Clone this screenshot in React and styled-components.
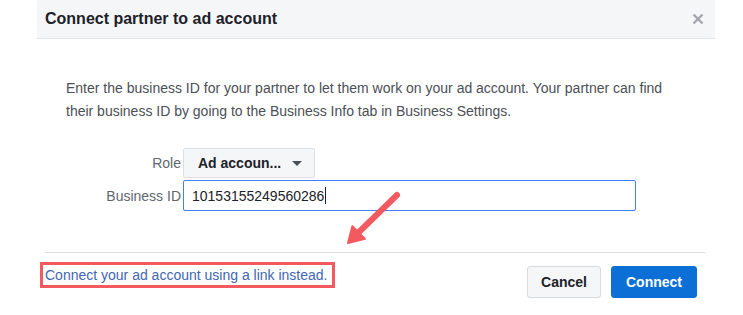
import React from "react";
import styled, { createGlobalStyle } from "styled-components";

const GlobalStyle = createGlobalStyle`
  body {
    margin: 0;
    background: #ffffff;
    font-family: "Liberation Sans", Arial, Helvetica, sans-serif;
  }
`;

const Dialog = styled.div`
  position: relative;
  margin-left: 37px;
  width: 678px;
  background: #ffffff;
`;

const Header = styled.div`
  display: flex;
  align-items: center;
  justify-content: space-between;
  height: 38px;
  padding: 0 9px 0 8px;
  background: #f5f6f7;
  border-bottom: 1px solid #e5e5e5;
`;

const Title = styled.h2`
  margin: 0;
  font-size: 16px;
  font-weight: bold;
  color: #1d2129;
`;

const Close = styled.button`
  display: flex;
  align-items: center;
  justify-content: center;
  width: 16px;
  height: 16px;
  padding: 0;
  border: 0;
  background: none;
`;

const Body = styled.div`
  padding: 38px 29px 0 29px;
`;

const Intro = styled.p`
  margin: 0;
  font-size: 14px;
  line-height: 23px;
  color: #4b4f56;
`;

const Form = styled.div`
  display: grid;
  grid-template-columns: 115px auto;
  column-gap: 2px;
  row-gap: 2px;
  align-items: center;
  margin-top: 25px;
`;

const Label = styled.label`
  text-align: right;
  font-size: 14px;
  color: #606770;
`;

const Select = styled.div`
  display: flex;
  align-items: center;
  justify-content: space-between;
  box-sizing: border-box;
  width: 132px;
  height: 30px;
  padding: 0 12px 0 14px;
  background: #f5f6f7;
  border: 1px solid #dddfe2;
  border-radius: 2px;
  font-size: 14px;
  font-weight: bold;
  color: #1d2129;
`;

const Caret = styled.span`
  width: 0;
  height: 0;
  border-left: 5px solid transparent;
  border-right: 5px solid transparent;
  border-top: 5px solid #4b4f56;
`;

const Input = styled.div`
  display: flex;
  align-items: center;
  box-sizing: border-box;
  width: 453px;
  height: 31px;
  padding: 0 8px;
  border: 1px solid #4080ff;
  border-radius: 2px;
  font-size: 14px;
  color: #1d2129;
`;

const TextCursor = styled.span`
  display: inline-block;
  width: 1px;
  height: 17px;
  margin-left: 1px;
  background: #1d2129;
`;

const Divider = styled.hr`
  margin: 41px 10px 0 8px;
  border: 0;
  border-top: 1px solid #dddfe2;
`;

const Footer = styled.div`
  display: flex;
  align-items: flex-start;
  justify-content: space-between;
  padding: 13px 18px 16px 3px;
`;

const LinkBox = styled.a`
  margin-top: -4px;
  padding: 1px 4px 1px 2px;
  border: 3px solid #f25a5f;
  font-size: 14px;
  line-height: 18px;
  color: #4267b2;
  text-decoration: none;
`;

const Buttons = styled.div`
  display: flex;
  gap: 10px;
`;

const Button = styled.button`
  box-sizing: border-box;
  height: 32px;
  padding: 0 ${(p) => (p.primary ? "14px" : "13px")};
  border-radius: 3px;
  font-family: inherit;
  font-size: 14px;
  font-weight: bold;
  border: 1px solid ${(p) => (p.primary ? "#0b6fd6" : "#d6d9dd")};
  background: ${(p) => (p.primary ? "#0b6fd6" : "#f5f6f7")};
  color: ${(p) => (p.primary ? "#ffffff" : "#1d2129")};
`;

const Arrow = styled.svg`
  position: absolute;
  left: 303px;
  top: 188px;
`;

export default function App() {
  return (
    <>
      <GlobalStyle />
      <Dialog>
        <Header>
          <Title>Connect partner to ad account</Title>
          <Close aria-label="Close">
            <svg width="12" height="12" viewBox="0 0 12 12">
              <path d="M1.5 1.5 L10.5 10.5 M10.5 1.5 L1.5 10.5" stroke="#a2a6ad" strokeWidth="2.4" />
            </svg>
          </Close>
        </Header>
        <Body>
          <Intro>
            Enter the business ID for your partner to let them work on your ad account. Your partner can find
            their business ID by going to the Business Info tab in Business Settings.
          </Intro>
          <Form>
            <Label>Role</Label>
            <Select>
              Ad accoun...
              <Caret />
            </Select>
            <Label>Business ID</Label>
            <Input>
              10153155249560286
              <TextCursor />
            </Input>
          </Form>
        </Body>
        <Divider />
        <Footer>
          <LinkBox href="#">Connect your ad account using a link instead.</LinkBox>
          <Buttons>
            <Button>Cancel</Button>
            <Button primary>Connect</Button>
          </Buttons>
        </Footer>
        <Arrow width="65" height="60" viewBox="0 0 65 60">
          <line x1="57" y1="7" x2="19" y2="44" stroke="#f25a5f" strokeWidth="6" strokeLinecap="round" />
          <polygon points="8,55 25,50.9 12.4,38.1" fill="#f25a5f" stroke="#f25a5f" strokeWidth="2" strokeLinejoin="round" />
        </Arrow>
      </Dialog>
    </>
  );
}
